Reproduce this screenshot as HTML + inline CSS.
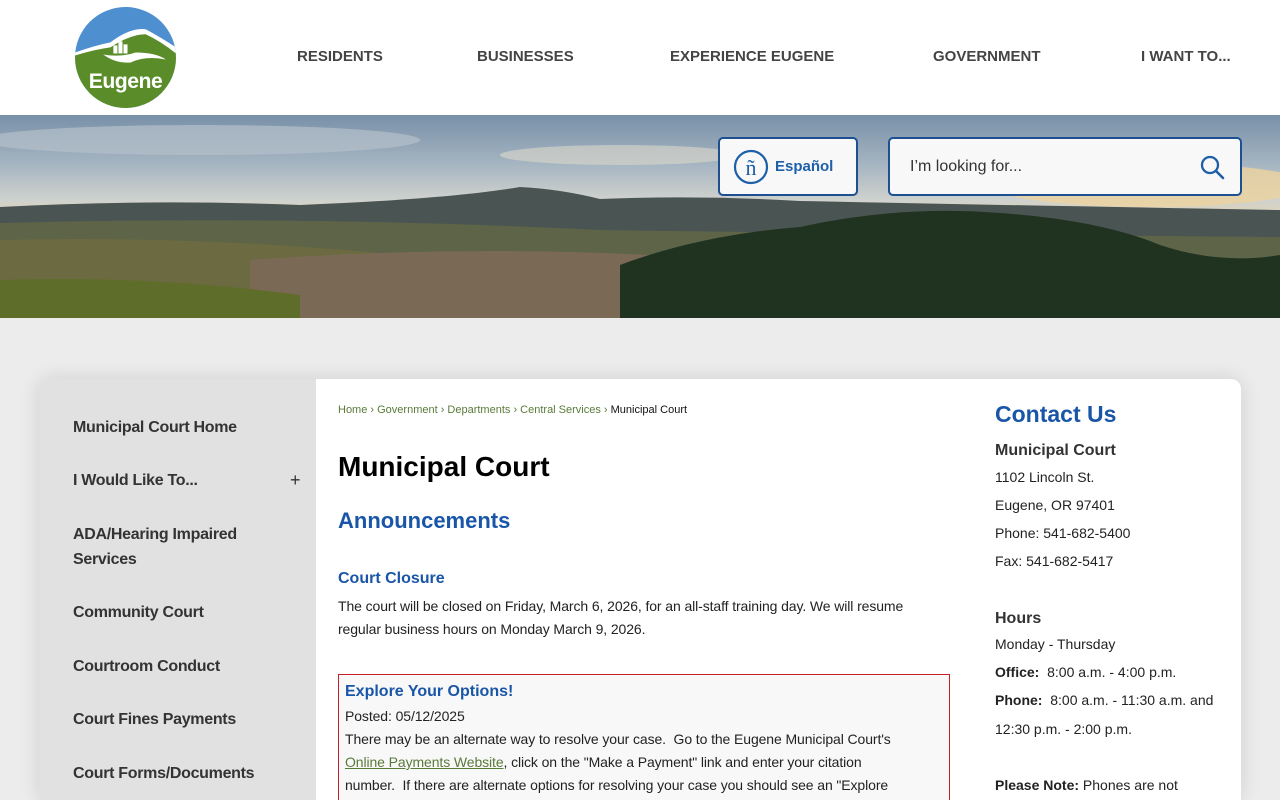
<!DOCTYPE html>
<html><head><meta charset="utf-8">
<style>
*{margin:0;padding:0;box-sizing:border-box}
html,body{width:1280px;height:800px;overflow:hidden}
body{background:#ececec;font-family:"Liberation Sans",sans-serif;color:#222;position:relative}
.hdr{position:absolute;left:0;top:0;width:1280px;height:115px;background:#fff}
.nav a{position:absolute;top:48px;font-weight:bold;font-size:15px;color:#444;text-decoration:none}
.hero{position:absolute;top:115px;left:0;width:1280px;height:203px;overflow:hidden;
background:linear-gradient(180deg,#7890a8 0%,#a7b6c2 25%,#cfd2ce 42%,#e0d2b4 50%)}
.box{position:absolute;background:#f8f8f8;border:2px solid #1d4f91;border-radius:5px}
.card{position:absolute;left:39px;top:379px;width:1202px;height:421px;background:#fff;border-radius:10px 10px 0 0;box-shadow:0 0 20px rgba(0,0,0,.12);overflow:hidden}
.side{position:absolute;left:0;top:0;width:277px;height:100%;background:#e1e1e1}
.side div{position:absolute;left:34px;font-size:16px;font-weight:bold;color:#333;line-height:25px;letter-spacing:-.3px}
.t{position:absolute;white-space:nowrap}
.p{font-size:14px;line-height:23px;color:#222;letter-spacing:-.1px}
h3{color:#1a56a8;font-size:16px}
.right div{position:absolute;left:956px;font-size:14px;white-space:nowrap}
</style></head><body>
<div class="hdr">
<svg style="position:absolute;left:75px;top:7px" width="101" height="101" viewBox="0 0 100 100">
<defs><clipPath id="c"><circle cx="50" cy="50" r="50"/></clipPath></defs>
<g clip-path="url(#c)">
<rect width="100" height="100" fill="#4e8fd0"/>
<path d="M0 45 Q20 38 35 35 Q55 20 70 22 Q85 30 100 40 L100 100 L0 100Z" fill="#fff"/>
<path d="M0 48 Q20 42 35 40 Q55 27 70 27 Q85 34 100 46 L100 100 L0 100Z" fill="#5a8d2a"/>
<path d="M28 47 Q45 50 60 45 Q80 45 90 52 Q70 48 55 55 Q40 56 28 47Z" fill="#fff"/>
<rect x="38" y="38" width="4" height="8" fill="#fff"/><rect x="43" y="34" width="4" height="12" fill="#fff"/><rect x="48" y="37" width="4" height="9" fill="#fff"/>
</g>
<text x="50" y="80" text-anchor="middle" font-family="Liberation Sans" font-weight="bold" font-size="21" fill="#fff" letter-spacing="-0.5">Eugene</text>
</svg>
<div class="nav">
<a style="left:297px">RESIDENTS</a><a style="left:477px">BUSINESSES</a><a style="left:670px">EXPERIENCE EUGENE</a><a style="left:933px">GOVERNMENT</a><a style="left:1141px">I WANT TO...</a>
</div>
</div>
<div class="hero">
<svg width="1280" height="203" style="position:absolute;left:0;top:0">
<ellipse cx="200" cy="25" rx="220" ry="15" fill="#b5c0ca" opacity=".7"/>
<ellipse cx="620" cy="40" rx="120" ry="10" fill="#dcd8cc" opacity=".6"/>
<ellipse cx="1150" cy="70" rx="160" ry="22" fill="#edd3a0" opacity=".8"/>
<path d="M0 92 Q150 84 300 90 Q450 84 520 72 Q560 74 600 84 Q700 80 800 86 Q1000 90 1280 95 L1280 203 L0 203Z" fill="#4a5452"/>
<path d="M0 108 Q300 100 600 115 Q800 118 1280 122 L1280 203 L0 203Z" fill="#5d6448"/>
<path d="M0 125 Q200 120 400 140 Q500 150 620 150 L620 203 L0 203Z" fill="#6c6a40"/>
<path d="M250 145 Q450 130 650 140 L650 203 L250 203Z" fill="#7a6a55"/>
<path d="M620 203 L620 150 Q700 120 800 112 Q900 90 1000 98 Q1100 105 1160 130 Q1220 150 1280 140 L1280 203Z" fill="#1f3320"/>
<path d="M0 165 Q150 160 300 180 L300 203 L0 203Z" fill="#5f6d2a"/>
</svg>
</div>
<div class="box" style="left:718px;top:137px;width:140px;height:59px">
<svg style="position:absolute;left:13px;top:10px" width="36" height="36" viewBox="0 0 36 36"><circle cx="18" cy="18" r="16" fill="none" stroke="#1d5fa8" stroke-width="2.2"/><text x="18" y="26" text-anchor="middle" font-family="Liberation Serif" font-size="22" fill="#1d5fa8">ñ</text></svg>
<span class="t" style="left:55px;top:19px;font-weight:bold;font-size:15px;color:#1d5fa8">Español</span>
</div>
<div class="box" style="left:888px;top:137px;width:354px;height:59px">
<span class="t" style="left:20px;top:19px;font-size:16px;color:#333">I’m looking for...</span>
<svg style="position:absolute;left:310px;top:16px" width="26" height="26" viewBox="0 0 26 26"><circle cx="10" cy="10" r="8" fill="none" stroke="#1d5fa8" stroke-width="2.3"/><path d="M16 16 L23 23" stroke="#1d5fa8" stroke-width="2.6" stroke-linecap="round"/></svg>
</div>
<div class="card">
<div class="side">
<div style="top:36px">Municipal Court Home</div>
<div style="top:89px">I Would Like To...</div><div style="left:251px;top:89px;font-weight:normal;font-size:18px">+</div>
<div style="top:143px">ADA/Hearing Impaired<br>Services</div>
<div style="top:221px">Community Court</div>
<div style="top:275px">Courtroom Conduct</div>
<div style="top:328px">Court Fines Payments</div>
<div style="top:382px">Court Forms/Documents</div>
</div>
<div class="t" style="left:299px;top:25px;font-size:11px;color:#5a7a3a">Home › Government › Departments › Central Services › <span style="color:#111">Municipal Court</span></div>
<div class="t" style="left:299px;top:72px;font-size:28px;font-weight:bold;color:#000">Municipal Court</div>
<div class="t" style="left:299px;top:129px;font-size:22px;font-weight:bold;color:#1a56a8">Announcements</div>
<h3 class="t" style="left:299px;top:191px">Court Closure</h3>
<div class="t p" style="left:299px;top:216px">The court will be closed on Friday, March 6, 2026, for an all-staff training day. We will resume<br>regular business hours on Monday March 9, 2026.</div>
<div style="position:absolute;left:299px;top:295px;width:612px;height:126px;border:1px solid #c8202a;border-bottom:none;background:#f8f8f8;overflow:hidden">
<h3 class="t" style="left:6px;top:8px">Explore Your Options!</h3>
<div class="t p" style="left:6px;top:30px">Posted: 05/12/2025<br>There may be an alternate way to resolve your case.&nbsp; Go to the Eugene Municipal Court's<br><span style="color:#5a7a3a;text-decoration:underline">Online Payments Website</span>, click on the "Make a Payment" link and enter your citation<br>number.&nbsp; If there are alternate options for resolving your case you should see an "Explore</div>
</div>
<div class="right">
<div style="top:22px;font-size:23px;font-weight:bold;color:#1a56a8">Contact Us</div>
<div style="top:63px;font-size:16px;font-weight:bold;color:#333">Municipal Court</div>
<div style="top:90px">1102 Lincoln St.</div>
<div style="top:118px">Eugene, OR 97401</div>
<div style="top:146px">Phone: 541-682-5400</div>
<div style="top:174px">Fax: 541-682-5417</div>
<div style="top:231px;font-size:16px;font-weight:bold;color:#333">Hours</div>
<div style="top:257px">Monday - Thursday</div>
<div style="top:285px"><b>Office:</b>&nbsp; 8:00 a.m. - 4:00 p.m.</div>
<div style="top:313px"><b>Phone:</b>&nbsp; 8:00 a.m. - 11:30 a.m. and</div>
<div style="top:342px">12:30 p.m. - 2:00 p.m.</div>
<div style="top:398px"><b>Please Note:</b> Phones are not</div>
</div>
</div>
</body></html>
